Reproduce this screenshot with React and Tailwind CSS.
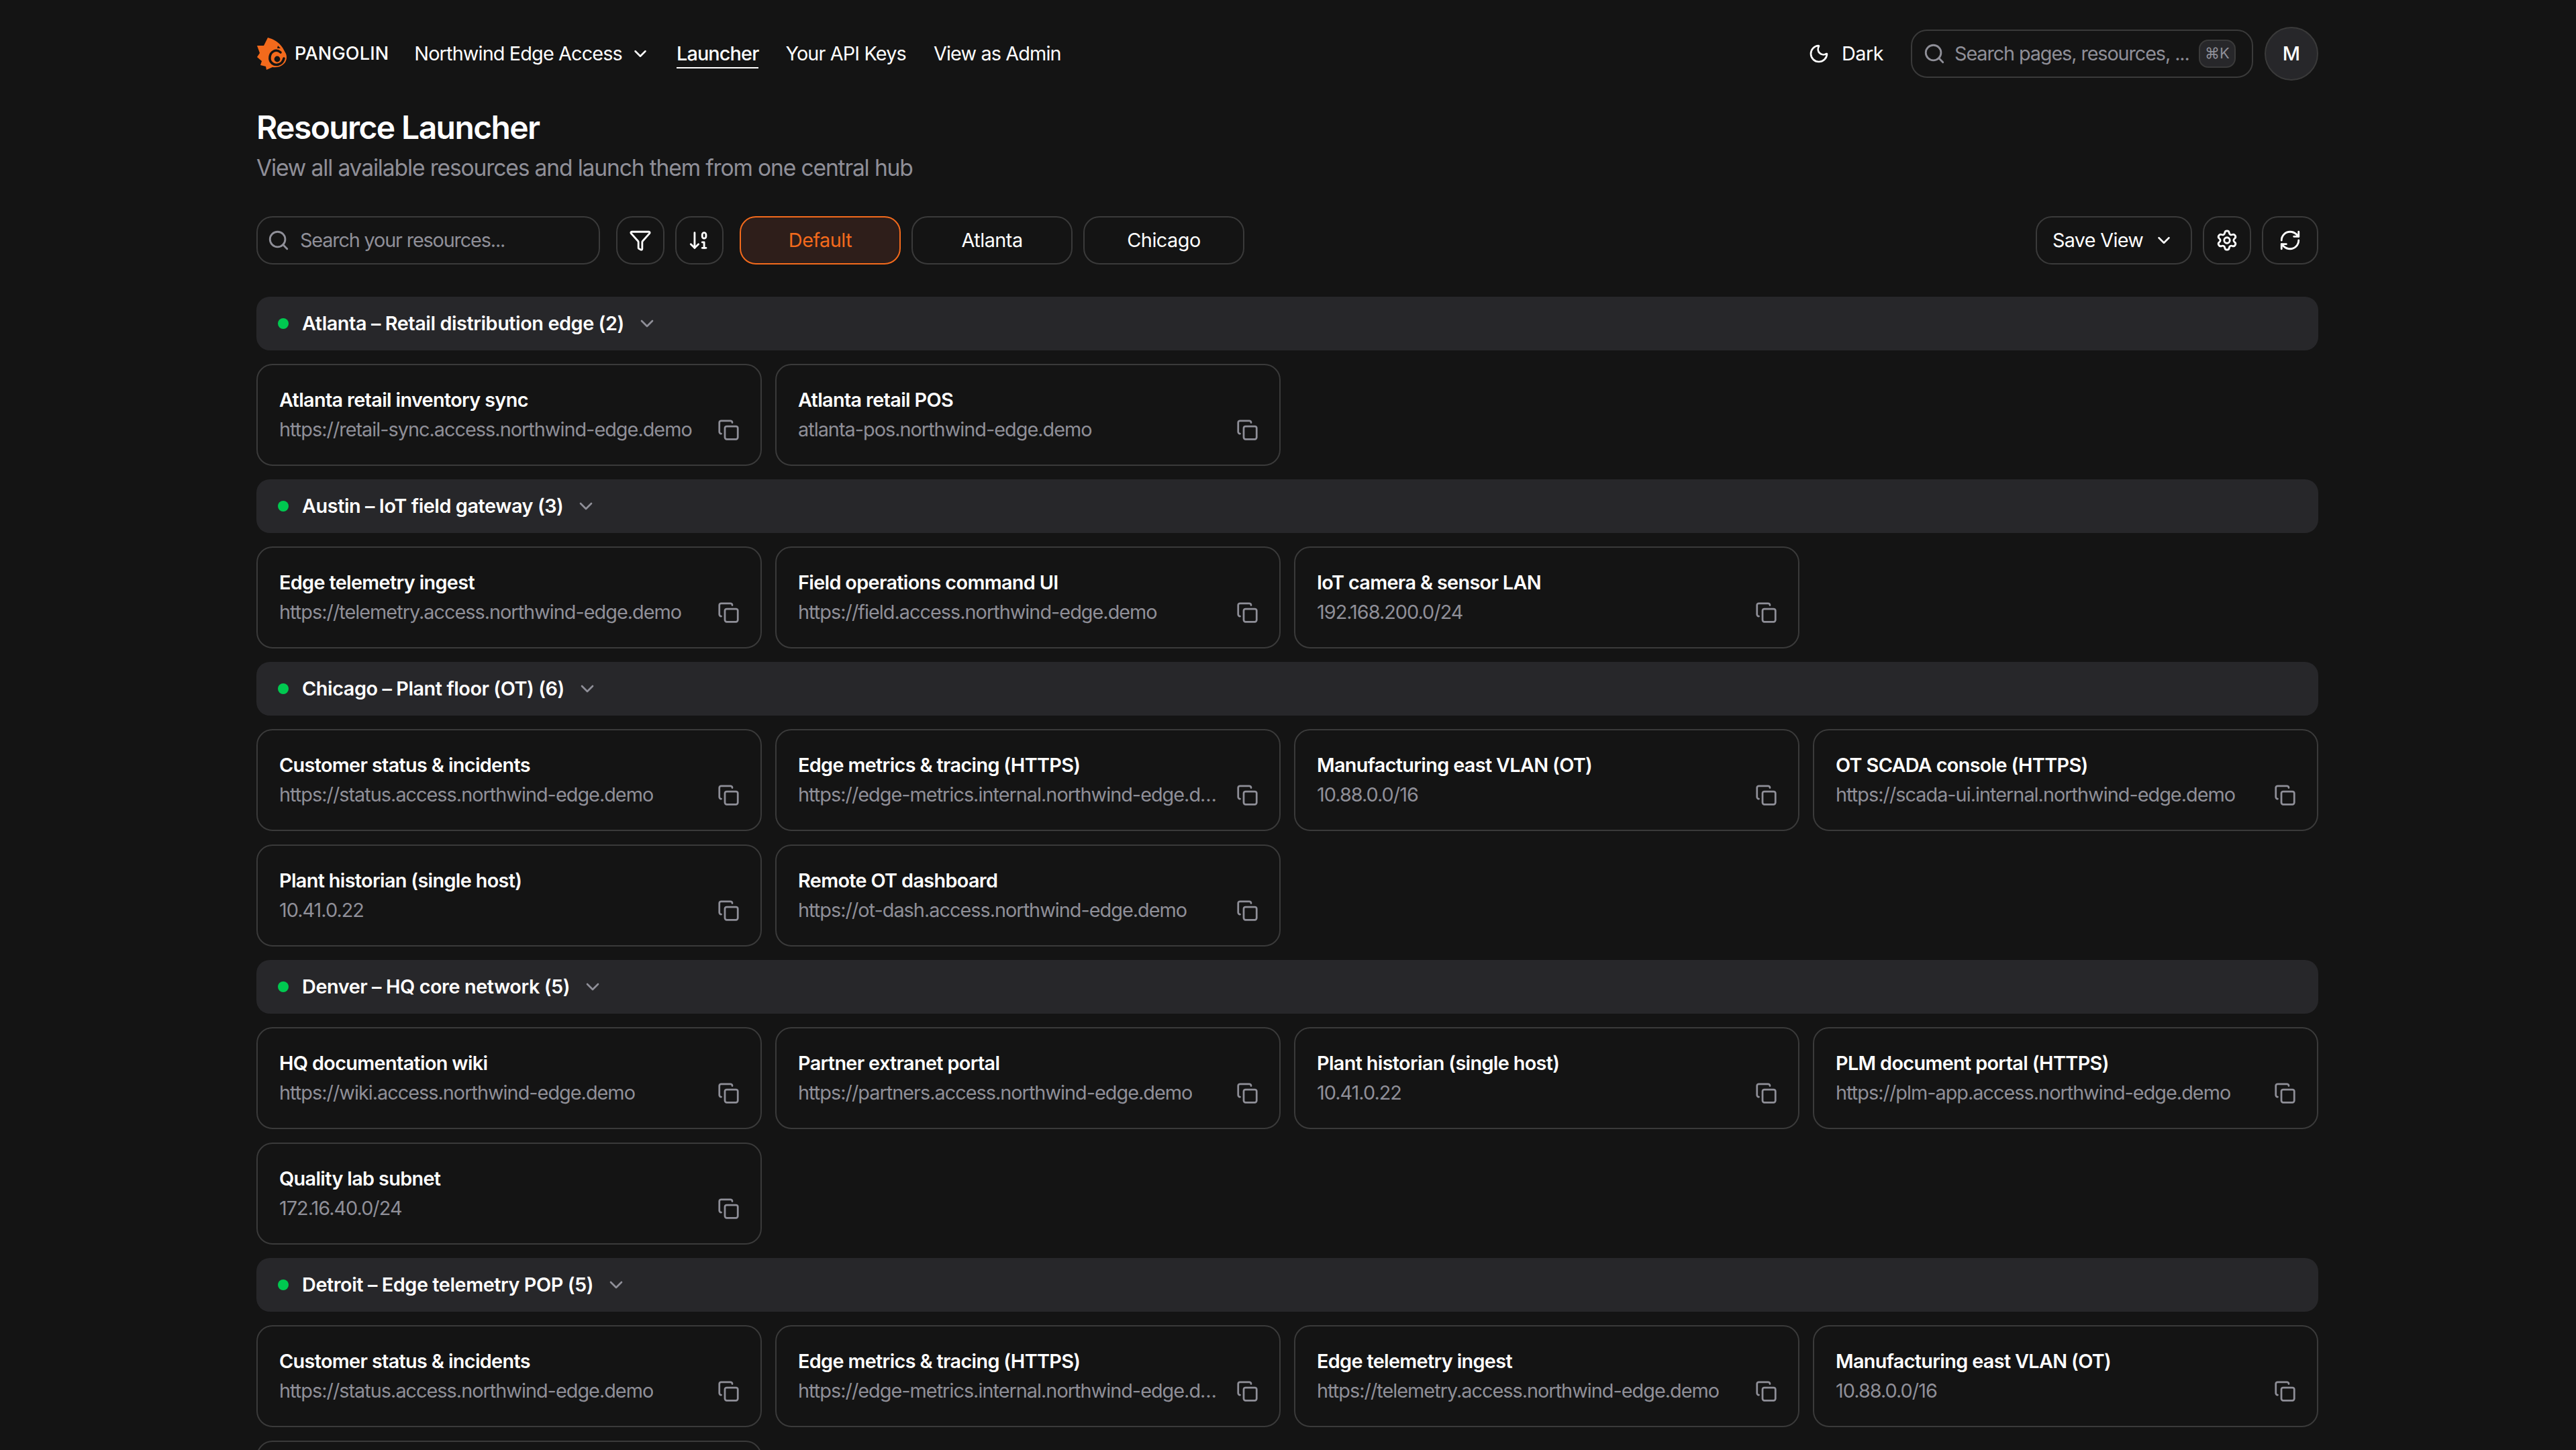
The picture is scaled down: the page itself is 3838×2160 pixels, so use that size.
import { ArrowDown01, ChevronDown, Copy, Funnel, Moon, RefreshCw, Search, Settings } from 'lucide-react'

const groups = [
    { name: 'Atlanta – Retail distribution edge (2)', items: [
        ['Atlanta retail inventory sync', 'https://retail-sync.access.northwind-edge.demo'],
        ['Atlanta retail POS', 'atlanta-pos.northwind-edge.demo'],
    ] },
    { name: 'Austin – IoT field gateway (3)', items: [
        ['Edge telemetry ingest', 'https://telemetry.access.northwind-edge.demo'],
        ['Field operations command UI', 'https://field.access.northwind-edge.demo'],
        ['IoT camera & sensor LAN', '192.168.200.0/24'],
    ] },
    { name: 'Chicago – Plant floor (OT) (6)', items: [
        ['Customer status & incidents', 'https://status.access.northwind-edge.demo'],
        ['Edge metrics & tracing (HTTPS)', 'https://edge-metrics.internal.northwind-edge.demo'],
        ['Manufacturing east VLAN (OT)', '10.88.0.0/16'],
        ['OT SCADA console (HTTPS)', 'https://scada-ui.internal.northwind-edge.demo'],
        ['Plant historian (single host)', '10.41.0.22'],
        ['Remote OT dashboard', 'https://ot-dash.access.northwind-edge.demo'],
    ] },
    { name: 'Denver – HQ core network (5)', items: [
        ['HQ documentation wiki', 'https://wiki.access.northwind-edge.demo'],
        ['Partner extranet portal', 'https://partners.access.northwind-edge.demo'],
        ['Plant historian (single host)', '10.41.0.22'],
        ['PLM document portal (HTTPS)', 'https://plm-app.access.northwind-edge.demo'],
        ['Quality lab subnet', '172.16.40.0/24'],
    ] },
    { name: 'Detroit – Edge telemetry POP (5)', items: [
        ['Customer status & incidents', 'https://status.access.northwind-edge.demo'],
        ['Edge metrics & tracing (HTTPS)', 'https://edge-metrics.internal.northwind-edge.demo'],
        ['Edge telemetry ingest', 'https://telemetry.access.northwind-edge.demo'],
        ['Manufacturing east VLAN (OT)', '10.88.0.0/16'],
        ['Remote OT dashboard', 'https://ot-dash.access.northwind-edge.demo'],
    ] },
]

function Logo() {
    return (
        <svg width="46" height="49" viewBox="0 0 46 49" className="shrink-0">
            <path fill="#f36a1c" d="M17 1C25 3 34 8 39 16L44 25C46 30 45 36 41 40C36 45 29 46 24 45L15 49L14 44L6 42L8 36L1 30L5 24L1 13L11 13Z" />
            <path fill="none" stroke="#141414" strokeWidth="3.6" strokeLinecap="round" d="M36 23C29 17 21 22 20 30C19 38 26 43 33 41C37 40 40 36 41 32" />
            <circle cx="31" cy="33" r="4.4" fill="#141414" />
            <path fill="#141414" d="M32 13L36 17L31 17Z" />
        </svg>
    )
}

function NavLink({ children, active }) {
    return (
        <span className={`relative text-[28.8px] leading-[40px] tracking-[-0.85px] text-white ${active ? 'font-medium' : ''}`}>
            {children}
            {active && <span className="absolute left-0 right-0 top-[38px] h-[2.4px] bg-white"></span>}
        </span>
    )
}

function ViewTab({ children, active }) {
    return (
        <button className={`w-[240px] h-[72px] rounded-[24px] border-2 text-[28.8px] tracking-[-0.5px] ${active ? 'border-[#f36a1c] bg-[#2e1e1a] text-[#f36a1c]' : 'border-[#3a3a3a] text-white'}`}>
            {children}
        </button>
    )
}

function IconButton({ children, wide }) {
    return (
        <button className={`${wide ? 'w-[84px]' : 'w-[72px]'} h-[72px] rounded-[24px] border-2 border-[#3a3a3a] flex items-center justify-center text-white`}>
            {children}
        </button>
    )
}

function ResourceCard({ title, url }) {
    return (
        <div className="h-[152px] rounded-[24px] border-2 border-[#3a3a3a] pl-[32px] pr-[31px] pt-[32px]">
            <div className="text-[28.8px] leading-[40px] font-semibold tracking-[-0.65px] text-white truncate">{title}</div>
            <div className="flex items-center justify-between gap-[25px] mt-[4px]">
                <div className="text-[28.8px] leading-[40px] tracking-[-0.97px] text-[#8f8f98] truncate">{url}</div>
                <Copy size={33} className="text-[#8f8f98] shrink-0" />
            </div>
        </div>
    )
}

export default function App() {
    return (
        <div className="h-screen overflow-hidden bg-[#141414] text-white font-['Inter',sans-serif]">
            <div className="w-[3072px] ml-[382px] pt-[40px]">
                {/* top nav */}
                <div className="flex items-center h-[79px]">
                    <Logo />
                    <span className="ml-[11px] pt-[2px] text-[27px] font-medium tracking-[0.2px]">PANGOLIN</span>
                    <span className="ml-[38px] flex items-center gap-[12px]">
                        <NavLink>Northwind Edge Access</NavLink>
                        <ChevronDown size={30} />
                    </span>
                    <span className="ml-[39px]"><NavLink active>Launcher</NavLink></span>
                    <span className="ml-[40px]"><NavLink>Your API Keys</NavLink></span>
                    <span className="ml-[41px]"><NavLink>View as Admin</NavLink></span>

                    <div className="ml-auto flex items-center">
                        <Moon size={32} />
                        <span className="ml-[18px] text-[28.8px] tracking-[-0.5px]">Dark</span>
                        <div className="ml-[41px] w-[510px] h-[72px] rounded-[24px] border-2 border-[#3a3a3a] flex items-center pl-[16px] pr-[24px]">
                            <Search size={34} className="text-[#8f8f98] shrink-0" />
                            <span className="ml-[13px] text-[28.8px] tracking-[-1.1px] text-[#8f8f98] truncate">Search pages, resources, ...</span>
                            <span className="ml-auto h-[42px] w-[55px] shrink-0 rounded-[14px] border-2 border-[#3a3a3a] bg-[#27272a] flex items-center justify-center text-[22px] text-[#8f8f98]">⌘K</span>
                        </div>
                        <div className="ml-[17px] w-[80px] h-[80px] rounded-full border-2 border-[#3a3a3a] bg-[#27272a] flex items-center justify-center text-[28.8px] font-medium">M</div>
                    </div>
                </div>

                {/* heading */}
                <h1 className="mt-[41px] text-[48px] leading-[60px] font-semibold tracking-[-1.6px]">Resource Launcher</h1>
                <p className="mt-[6px] text-[33.6px] leading-[48px] tracking-[-1.15px] text-[#8f8f98]">View all available resources and launch them from one central hub</p>

                {/* toolbar */}
                <div className="mt-[48px] flex items-center">
                    <div className="w-[512px] h-[72px] rounded-[24px] border-2 border-[#3a3a3a] flex items-center pl-[14px]">
                        <Search size={34} className="text-[#8f8f98]" />
                        <span className="ml-[15px] text-[28.8px] tracking-[-1.15px] text-[#8f8f98]">Search your resources...</span>
                    </div>
                    <div className="ml-[24px]"><IconButton><Funnel size={34} /></IconButton></div>
                    <div className="ml-[16px]"><IconButton><ArrowDown01 size={34} /></IconButton></div>
                    <div className="ml-[24px] flex gap-[16px]">
                        <ViewTab active>Default</ViewTab>
                        <ViewTab>Atlanta</ViewTab>
                        <ViewTab>Chicago</ViewTab>
                    </div>
                    <div className="ml-auto flex items-center gap-[16px]">
                        <button className="w-[233px] h-[72px] rounded-[24px] border-2 border-[#3a3a3a] flex items-center pl-[23px] gap-[16px] text-[28.8px] tracking-[-0.7px]">
                            Save View
                            <ChevronDown size={30} />
                        </button>
                        <IconButton><Settings size={34} /></IconButton>
                        <IconButton wide><RefreshCw size={34} /></IconButton>
                    </div>
                </div>

                {/* resource groups */}
                <div className="mt-[48px] flex flex-col gap-[20px]">
                    {groups.map((g) => (
                        <section key={g.name}>
                            <div className="h-[80px] rounded-[20px] bg-[#27272a] flex items-center pl-[32px]">
                                <span className="w-[16px] h-[16px] rounded-full bg-[#00c950]"></span>
                                <span className="ml-[20px] text-[28.8px] font-semibold tracking-[-0.42px]">{g.name}</span>
                                <ChevronDown size={32} className="ml-[18px] text-[#8f8f98]" />
                            </div>
                            <div className="mt-[20px] grid grid-cols-4 gap-x-[20px] gap-y-[20px]">
                                {g.items.map((item) => (
                                    <ResourceCard key={item[0]} title={item[0]} url={item[1]} />
                                ))}
                            </div>
                        </section>
                    ))}
                </div>
            </div>
        </div>
    )
}
